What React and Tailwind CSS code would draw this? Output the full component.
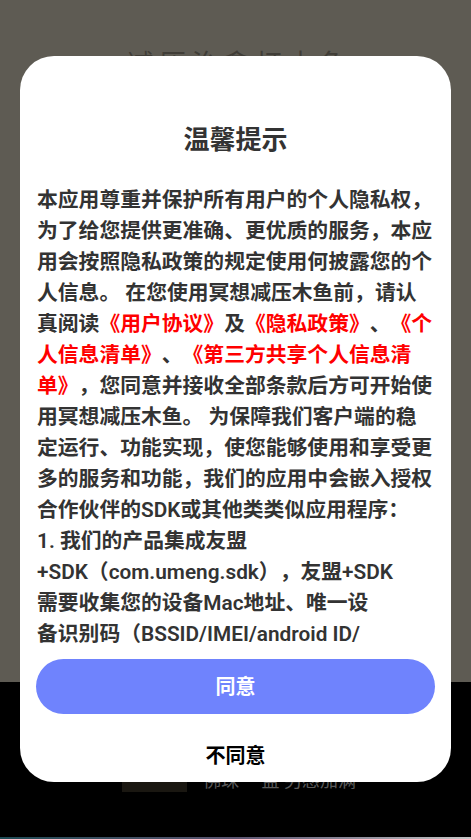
import React from 'react'

const font = "font-['Roboto','Noto_Sans_CJK_SC',sans-serif]"

function Red({ children }) {
  return <span className="text-[#ff0000]">{children}</span>
}

export default function App() {
  const lines = [
    <>本应用尊重并保护所有用户的个人隐私权，</>,
    <>为了给您提供更准确、更优质的服务，本应</>,
    <>用会按照隐私政策的规定使用何披露您的个</>,
    <>人信息。 在您使用冥想减压木鱼前，请认</>,
    <>真阅读<Red>《用户协议》</Red>及<Red>《隐私政策》</Red>、<Red>《个</Red></>,
    <><Red>人信息清单》</Red>、<Red>《第三方共享个人信息清</Red></>,
    <><Red>单》</Red>，您同意并接收全部条款后方可开始使</>,
    <>用冥想减压木鱼。 为保障我们客户端的稳</>,
    <>定运行、功能实现，使您能够使用和享受更</>,
    <>多的服务和功能，我们的应用中会嵌入授权</>,
    <>合作伙伴的SDK或其他类类似应用程序：</>,
    <>1. 我们的产品集成友盟</>,
    <>+SDK（com.umeng.sdk），友盟+SDK</>,
    <>需要收集您的设备Mac地址、唯一设</>,
    <>备识别码（BSSID/IMEI/android ID/</>,
    <>等）用于唯一标识设备，以便提供统计分析</>,
  ]

  return (
    <div className={`relative w-full h-[839px] overflow-hidden bg-black ${font} [text-spacing-trim:space-all]`}>
      {/* page behind the dialog */}
      <div className="h-[682px] bg-[#5e5b53] flex justify-center">
        <div className="mt-[48px] ml-[8px] text-[26px] leading-[32px] tracking-[6px] text-[#403d37]">减压治愈打木鱼</div>
      </div>
      <div className="h-[155px] bg-black rounded-bl-[8px] flex items-start">
        <div className="ml-[122px] mt-[96px] w-[65px] h-[14px] bg-[#1a1711]"></div>
        <div className="ml-[16px] mt-[88px] text-[18px] leading-[22px] text-[#5a5a5a]">佛珠 一盘 另感加满</div>
      </div>
      <div className="h-[2px] bg-gradient-to-r from-[#1d4b55] via-[#5a5470] to-[#c8c8c8]"></div>

      {/* dialog */}
      <div className="absolute left-[20px] top-[56px] w-[431px] h-[726px] bg-white rounded-[34px] flex flex-col items-center">
        <div className="mt-[71px] text-[26px] leading-[26px] font-semibold text-[#333333]">温馨提示</div>
        <div className="mt-[32px] w-full h-[466px] overflow-hidden pl-[17px] text-[20.8px] leading-[31px] font-semibold text-[#333333]">
          {lines.map((l, i) => (
            <div key={i} className="whitespace-nowrap">{l}</div>
          ))}
        </div>
        <button className="mt-[8px] w-[399px] h-[55px] rounded-full bg-[#6f83fd] text-white text-[20px] leading-[24px] font-semibold">同意</button>
        <button className="mt-[30px] text-[20px] leading-[24px] font-semibold text-black">不同意</button>
      </div>
    </div>
  )
}
